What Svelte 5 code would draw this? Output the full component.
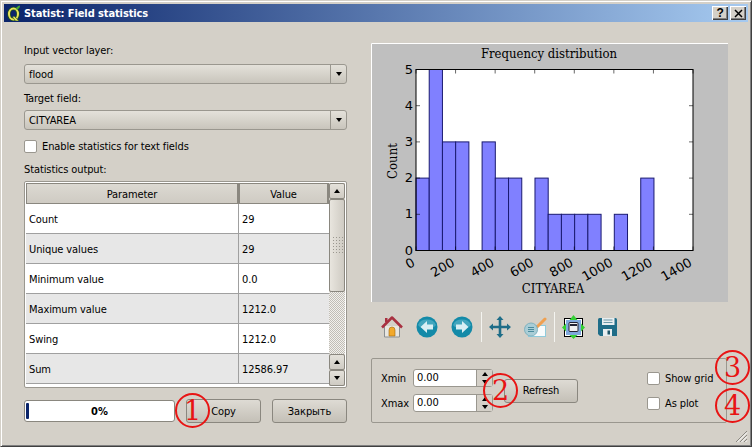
<script>
  const rows = [
    ['Count', '29'],
    ['Unique values', '29'],
    ['Minimum value', '0.0'],
    ['Maximum value', '1212.0'],
    ['Swing', '1212.0'],
    ['Sum', '12586.97'],
  ]

  const counts = [2, 5, 3, 3, 0, 3, 2, 2, 0, 2, 1, 1, 1, 1, 0, 1, 0, 2]
  const x0 = 45
  const y0 = 207.5
  const binW = 13.22
  const unit = 36.2
  const bars = counts
    .map((c, i) => ({ c, x: x0 + i * binW, h: c * unit }))
    .filter((b) => b.c > 0)
  const yTicks = [0, 1, 2, 3, 4, 5]
  const xTicks = [0, 200, 400, 600, 800, 1000, 1200, 1400]
  const xPos = (v) => x0 + (v / 1400) * 277
</script>

<div class="window">
  <header class="titlebar">
    <svg class="app-icon" viewBox="0 0 16 16" width="16" height="16">
      <ellipse cx="7.500" cy="9" rx="4.500" ry="5.500" fill="none" stroke="#24521a" stroke-width="3.400" />
      <ellipse cx="7.500" cy="9" rx="4.500" ry="5.500" fill="none" stroke="#e6e35c" stroke-width="2" />
      <path d="M8 11l5 5h-3.500L6.500 12z" fill="#e6e35c" stroke="#24521a" stroke-width=".6" />
      <path d="M9.500 4.500C10 2.500 11.500 1 14 .5c0 2.500-1.500 4-4.500 4z" fill="#46a832" />
    </svg>
    <span class="title">Statist: Field statistics</span>
    <span class="cap-btn">?</span>
    <span class="cap-btn close">
      <svg viewBox="0 0 9 9" width="9" height="9"><path d="M1 1l7 7M8 1L1 8" stroke="#000" stroke-width="1.500" /></svg>
    </span>
  </header>

  <div class="body">
    <section class="left">
      <label class="lbl first" for="layer">Input vector layer:</label>
      <div class="combo" id="layer">
        <span>flood</span>
        <i class="drop"><b class="tri down"></b></i>
      </div>
      <label class="lbl" for="field">Target field:</label>
      <div class="combo" id="field">
        <span>CITYAREA</span>
        <i class="drop"><b class="tri down"></b></i>
      </div>
      <div class="check-row text-stats">
        <span class="check"></span>
        <span>Enable statistics for text fields</span>
      </div>
      <div class="lbl out">Statistics output:</div>

      <div class="table-frame">
        <div class="table">
          <div class="thead">
            <div class="th c1">Parameter</div>
            <div class="th c2">Value</div>
          </div>
          {#each rows as row, i}
            <div class="tr" class:alt={i % 2 === 1}>
              <div class="td c1">{row[0]}</div>
              <div class="td c2">{row[1]}</div>
            </div>
          {/each}
        </div>
        <div class="scroll">
          <div class="sbtn"><b class="tri up"></b></div>
          <div class="thumb">
            <div class="grip"></div>
          </div>
          <div class="track"></div>
          <div class="sbtn"><b class="tri up"></b></div>
          <div class="sbtn"><b class="tri down"></b></div>
        </div>
      </div>

      <div class="actions">
        <div class="progress">
          <i class="chunk"></i>
          <span>0%</span>
        </div>
        <div class="btn copy">Copy</div>
        <div class="btn close-btn">Закрыть</div>
      </div>
    </section>

    <section class="right">
      <svg class="chart" viewBox="0 0 357 259" width="357" height="259">
        <rect width="357" height="259" fill="#bfbfbf" />
        <path d="M.5 259V.5H357" fill="none" stroke="#fff" />
        <text x="178" y="15" class="ctitle" text-anchor="middle">Frequency distribution</text>
        <rect x={x0} y="26" width="277" height="181.500" fill="#fff" />
        {#each bars as b}
          <rect x={b.x} y={y0 - b.h} width={binW} height={b.h} fill="#8080ff" stroke="#1a1a70" stroke-width="1" />
        {/each}
        <rect x={x0} y="26.500" width="277" height="181" fill="none" stroke="#000" stroke-width="1" />
        {#each yTicks as t}
          <path d="M{x0} {y0 - t * unit}h4M{x0 + 277} {y0 - t * unit}h-4" stroke="#000" stroke-width=".6" />
          <text x={x0 - 3} y={y0 - t * unit + 4} class="tick" text-anchor="end">{t}</text>
        {/each}
        {#each xTicks as t}
          <path d="M{xPos(t)} {y0}v-4M{xPos(t)} 26.500v4" stroke="#000" stroke-width=".6" />
          <text class="tick" text-anchor="end" transform="translate({xPos(t)} 222) rotate(-30)">{t}</text>
        {/each}
        <text x="182" y="250" class="ctitle" text-anchor="middle">CITYAREA</text>
        <text class="ctitle" text-anchor="middle" transform="translate(26 118) rotate(-90)">Count</text>
      </svg>

      <div class="toolbar">
        <svg viewBox="0 0 24 24" width="24" height="24">
          <path d="M4.500 11v11h15V11" fill="#e8e6e0" stroke="#8a8f92" />
          <path d="M9 21v-6a3 3 0 0 1 6 0v6z" fill="#f2a92c" stroke="#a06a10" stroke-width=".6" />
          <path d="M2 12.500 12 2.500l10 10" fill="none" stroke="#a83040" stroke-width="2.500" stroke-linejoin="round" />
          <rect x="5" y="3" width="2.500" height="4" fill="#a83040" />
        </svg>
        <svg class="gap1" viewBox="0 0 24 24" width="24" height="24">
          <circle cx="12" cy="12" r="10.500" fill="#138aa8" />
          <path d="M3 10a9.500 8 0 0 1 18 0 9.500 5 0 0 1-18 0z" fill="#7cc8da" opacity=".45" />
          <path d="M5.500 12 12 6v3.500h6v5h-6V18z" fill="#d8eff4" />
        </svg>
        <svg class="gap2" viewBox="0 0 24 24" width="24" height="24">
          <circle cx="12" cy="12" r="10.500" fill="#138aa8" />
          <path d="M3 10a9.500 8 0 0 1 18 0 9.500 5 0 0 1-18 0z" fill="#7cc8da" opacity=".45" />
          <path d="M18.500 12 12 6v3.500H6v5h6V18z" fill="#d8eff4" />
        </svg>
        <i class="sep first-sep"></i>
        <svg class="gap3" viewBox="0 0 24 24" width="24" height="24">
          <path d="M12 1l3.500 4H13.300v5.700H19V8.500l4 3.500-4 3.500v-2.200h-5.700V19h2.200L12 23l-3.500-4h2.200v-5.700H5v2.200L1 12l4-3.500v2.200h5.700V5H8.500z" fill="#1f6d88" />
        </svg>
        <svg class="gap4" viewBox="0 0 24 24" width="24" height="24">
          <rect x="5.500" y="10.500" width="17" height="11" fill="#f8fbfc" stroke="#8fcbdc" />
          <path d="M14.500 11.500 22 4" stroke="#f0a050" stroke-width="3" stroke-linecap="round" />
          <circle cx="8" cy="14.500" r="6.500" fill="#a9cdd6" stroke="#7fb2c0" />
          <path d="M5 12.500h6M5 14.500h6M5 16.500h6" stroke="#4a8c9e" />
        </svg>
        <i class="sep second-sep"></i>
        <svg class="gap5" viewBox="0 0 24 24" width="24" height="24">
          <rect x="3.500" y="3.500" width="18" height="18" fill="#fff" stroke="#000" />
          <rect x="5" y="5" width="15" height="15" fill="#7fa8dc" />
          <rect x="8" y="7.500" width="9" height="9" rx="1" fill="#f0f0f0" stroke="#223" />
          <path d="M9 10h7" stroke="#223" stroke-width="2" />
          <path d="M12.500 0l4 5h-8zM12.500 24l-4-4h8zM1 12.500l4-4v8zM24 12.500l-4 4v-8z" fill="#35d035" />
        </svg>
        <svg class="gap6" viewBox="0 0 24 24" width="24" height="24">
          <path d="M2 4.500A1.500 1.500 0 0 1 3.500 3h16A1.500 1.500 0 0 1 21 4.500V21H4l-2-2z" fill="#1f6d88" />
          <rect x="6" y="3" width="12.500" height="7" fill="#e8eef0" />
          <path d="M7.500 5h9M7.500 7.500h9" stroke="#6a98a8" />
          <rect x="7" y="14" width="9" height="7" fill="#e8eef0" />
          <rect x="11.500" y="15.500" width="2.500" height="4" fill="#1f5568" />
        </svg>
      </div>

      <div class="group">
        <div class="spins">
          <div class="spin-row">
            <span class="spin-lbl">Xmin</span>
            <div class="spin">
              <span class="spin-val">0.00</span>
              <div class="arrows"><i><b class="tri up"></b></i><i><b class="tri down"></b></i></div>
            </div>
          </div>
          <div class="spin-row">
            <span class="spin-lbl">Xmax</span>
            <div class="spin">
              <span class="spin-val">0.00</span>
              <div class="arrows"><i><b class="tri up"></b></i><i><b class="tri down"></b></i></div>
            </div>
          </div>
        </div>
        <div class="btn refresh">Refresh</div>
        <div class="checks">
          <div class="check-row"><span class="check"></span><span>Show grid</span></div>
          <div class="check-row"><span class="check"></span><span>As plot</span></div>
        </div>
      </div>
    </section>
  </div>

  <svg class="grip-corner" viewBox="0 0 13 13" width="13" height="13">
    <path d="M12 1 1 12M12 5 5 12M12 9 9 12" stroke="#8a877f" stroke-width="1" />
    <path d="M12 2.500 2.500 12M12 6.500 6.500 12M12 10.500 10.500 12" stroke="#fff" stroke-width="1" />
  </svg>

  <!-- red annotations drawn over the screenshot -->
  <div class="mark m1">1</div>
  <div class="mark m2">2</div>
  <div class="mark m3">3</div>
  <div class="mark m4">4</div>
</div>

<style>
  :global(body) {
    margin: 0;
    background: #d4d0c8;
  }
  .window {
    position: relative;
    width: 752px;
    height: 447px;
    box-sizing: border-box;
    overflow: hidden;
    padding: 4px;
    background: #d4d0c8;
    border: 1px solid;
    border-color: #d4d0c8 #404040 #404040 #d4d0c8;
    box-shadow: inset 1px 1px 0 #fff, inset -1px -1px 0 #808080;
    font-family: "DejaVu Sans", sans-serif;
    font-stretch: condensed;
    font-size: 11px;
    letter-spacing: -0.1px;
    color: #000;
  }
  .titlebar {
    display: flex;
    align-items: center;
    height: 18px;
    margin: -1px -1px 0 -1px;
    padding: 0 2px 0 2px;
    background: linear-gradient(90deg, #0a246a, #a6caf0);
  }
  .app-icon {
    flex: none;
  }
  .title {
    flex: 1;
    margin-left: 2px;
    color: #fff;
    font-size: 11px;
    font-weight: bold;
    letter-spacing: -0.1px;
  }
  .cap-btn {
    display: flex;
    align-items: center;
    justify-content: center;
    width: 16px;
    height: 14px;
    background: #d4d0c8;
    box-shadow: inset 1px 1px 0 #fff, inset -1px -1px 0 #404040, inset -2px -2px 0 #808080;
    font-family: "Liberation Sans", sans-serif;
    font-size: 12px;
    font-weight: bold;
  }
  .close {
    margin-left: 2px;
  }
  .body {
    display: flex;
    padding: 0 0 0 19px;
  }
  .left {
    display: flex;
    flex-direction: column;
    width: 323px;
    flex: none;
  }
  .lbl {
    display: block;
    height: 12px;
    line-height: 14px;
    margin: 8px 0 6px;
  }
  .lbl.first {
    margin-top: 22px;
    margin-bottom: 8px;
  }
  .combo {
    display: flex;
    align-items: center;
    justify-content: space-between;
    box-sizing: border-box;
    height: 20px;
    padding-left: 4px;
    border: 1px solid #9a978f;
    border-radius: 3px;
    background: linear-gradient(#e4e1da, #c9c5bc);
  }
  .drop {
    display: flex;
    align-items: center;
    justify-content: center;
    width: 15px;
    height: 100%;
    border-left: 1px solid #9a978f;
  }
  .tri {
    display: block;
    width: 0;
    height: 0;
    border-left: 3.500px solid transparent;
    border-right: 3.500px solid transparent;
  }
  .tri.down {
    border-top: 4px solid #000;
  }
  .tri.up {
    border-bottom: 4px solid #000;
  }
  .check-row {
    display: flex;
    align-items: center;
    gap: 5px;
  }
  .text-stats {
    margin-top: 10px;
  }
  .check {
    display: block;
    box-sizing: border-box;
    width: 13px;
    height: 13px;
    border: 1px solid #9a978f;
    border-radius: 2px;
    background: #fff;
  }
  .lbl.out {
    margin: 10px 0 6px;
  }
  .table-frame {
    display: flex;
    box-sizing: border-box;
    height: 207px;
    padding: 1px;
    border: 1px solid #9a978f;
    border-radius: 2px;
    background: #fff;
  }
  .table {
    flex: 1;
    overflow: hidden;
  }
  .thead {
    display: flex;
    height: 21px;
  }
  .th {
    display: flex;
    align-items: center;
    justify-content: center;
    box-sizing: border-box;
    padding-top: 1px;
    background: linear-gradient(#dcd9d2, #cfcbc3);
    border-right: 2px solid #8a877f;
    border-bottom: 1px solid #8a877f;
    border-top: 1px solid #8a877f;
    border-left: 1px solid #8a877f;
  }
  .c1 {
    width: 213px;
    flex: none;
  }
  .c2 {
    flex: 1;
  }
  .tr {
    display: flex;
    height: 30px;
    box-sizing: border-box;
    border-bottom: 1px solid #a0a0a0;
    background: #fff;
  }
  .tr.alt {
    background: #e7e7e7;
  }
  .td {
    display: flex;
    align-items: center;
    box-sizing: border-box;
    padding: 1px 0 0 3px;
  }
  .td.c1 {
    border-right: 1px solid #a0a0a0;
  }
  .scroll {
    display: flex;
    flex-direction: column;
    width: 16px;
    flex: none;
    background: #d4d0c8;
  }
  .sbtn {
    display: flex;
    align-items: center;
    justify-content: center;
    box-sizing: border-box;
    height: 16px;
    border: 1px solid #8a877f;
    border-radius: 2px;
    background: linear-gradient(#e4e1da, #cfcbc3);
  }
  .thumb {
    display: flex;
    align-items: center;
    justify-content: center;
    box-sizing: border-box;
    height: 93px;
    border: 1px solid #8a877f;
    border-radius: 2px;
    background: linear-gradient(90deg, #e8e5de, #cfcbc3);
  }
  .grip {
    width: 11px;
    height: 19px;
    background-image: radial-gradient(#9a978f 35%, transparent 40%);
    background-size: 3px 3px;
  }
  .track {
    flex: 1;
    background-image: repeating-conic-gradient(#c0bdb6 0 25%, #f2f0ec 0 50%);
    background-size: 2px 2px;
  }
  .actions {
    display: flex;
    align-items: center;
    margin-top: 11px;
  }
  .progress {
    position: relative;
    display: flex;
    align-items: center;
    justify-content: center;
    box-sizing: border-box;
    width: 151px;
    height: 22px;
    border: 1px solid #8a877f;
    border-radius: 3px;
    background: #fff;
    font-weight: bold;
    letter-spacing: 0;
  }
  .chunk {
    position: absolute;
    left: 1px;
    top: 2px;
    bottom: 2px;
    width: 3px;
    background: #0a246a;
    border-radius: 1px;
  }
  .btn {
    display: flex;
    align-items: center;
    justify-content: center;
    box-sizing: border-box;
    border: 1px solid #8a877f;
    border-radius: 3px;
    background: linear-gradient(#dedbd4, #c4c0b7);
  }
  .copy {
    width: 75px;
    height: 24px;
    margin-left: 11px;
  }
  .close-btn {
    width: 75px;
    height: 24px;
    margin-left: 11px;
  }
  .right {
    display: flex;
    flex-direction: column;
    margin-left: 24px;
    width: 357px;
    flex: none;
  }
  .chart {
    display: block;
    margin-top: 21px;
    letter-spacing: 0;
  }
  .ctitle {
    font-family: "DejaVu Serif", serif;
    font-stretch: condensed;
    font-size: 13px;
    fill: #000;
  }
  .tick {
    font-family: "DejaVu Sans", sans-serif;
    font-stretch: normal;
    font-size: 13px;
    fill: #000;
  }
  .toolbar {
    display: flex;
    align-items: center;
    height: 44px;
    margin-top: 3px;
    padding-left: 9px;
  }
  .toolbar svg {
    flex: none;
  }
  .gap1,
  .gap2,
  .gap4,
  .gap6 {
    margin-left: 11px;
  }
  .gap3,
  .gap5 {
    margin-left: 6px;
  }
  .sep {
    display: block;
    width: 1px;
    height: 30px;
    background: #f4f4f0;
  }
  .first-sep,
  .second-sep {
    margin-left: 7px;
  }
  .group {
    display: flex;
    align-items: center;
    box-sizing: border-box;
    width: 356px;
    height: 65px;
    margin-top: 9px;
    padding-left: 9px;
    border: 1px solid #9a978f;
    border-radius: 2px;
  }
  .spins {
    display: flex;
    flex-direction: column;
    gap: 7px;
  }
  .spin-row {
    display: flex;
    align-items: center;
  }
  .spin-lbl {
    width: 32px;
  }
  .spin {
    display: flex;
    box-sizing: border-box;
    width: 80px;
    height: 18px;
    border: 1px solid #9a978f;
    border-radius: 3px;
    background: #fff;
  }
  .spin-val {
    flex: 1;
    line-height: 16px;
    padding-left: 3px;
  }
  .arrows {
    display: flex;
    flex-direction: column;
    width: 15px;
    border-left: 1px solid #9a978f;
    background: #d4d0c8;
  }
  .arrows i {
    flex: 1;
    display: flex;
    align-items: center;
    justify-content: center;
  }
  .refresh {
    width: 74px;
    height: 24px;
    margin-left: 11px;
  }
  .checks {
    display: flex;
    flex-direction: column;
    gap: 12px;
    margin-left: 69px;
  }
  .grip-corner {
    position: absolute;
    right: 3px;
    bottom: 3px;
  }
  .mark {
    position: absolute;
    box-sizing: border-box;
    width: 35px;
    height: 35px;
    border: 2px solid #e81414;
    border-radius: 50%;
    color: #e81414;
    font-family: "DejaVu Serif", serif;
    font-stretch: normal;
    font-size: 27px;
    letter-spacing: 0;
    line-height: 31px;
    text-align: center;
  }
  .m1 {
    left: 174px;
    top: 392px;
  }
  .m2 {
    left: 482px;
    top: 372px;
  }
  .m3 {
    left: 714px;
    top: 349px;
  }
  .m4 {
    left: 714px;
    top: 387px;
  }
</style>
